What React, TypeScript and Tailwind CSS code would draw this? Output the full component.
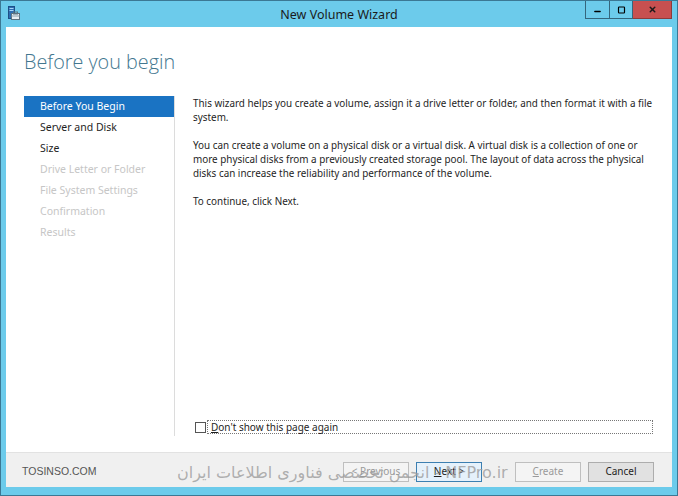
import { Minus, Square, X } from 'lucide-react';

const steps = [
  { label: 'Before You Begin', state: 'active' },
  { label: 'Server and Disk', state: 'enabled' },
  { label: 'Size', state: 'enabled' },
  { label: 'Drive Letter or Folder', state: 'disabled' },
  { label: 'File System Settings', state: 'disabled' },
  { label: 'Confirmation', state: 'disabled' },
  { label: 'Results', state: 'disabled' },
];

const WizardIcon = () => (
  <svg width="12" height="15" viewBox="0 0 12 15">
    <rect x="0.5" y="0.5" width="6" height="12" fill="#2d6fb3" stroke="#1d4f86" />
    <rect x="1.5" y="2" width="4" height="1" fill="#a9d4f5" />
    <rect x="1.5" y="4" width="4" height="1" fill="#a9d4f5" />
    <rect x="3.5" y="7.5" width="8" height="6" fill="#e8eef3" stroke="#5d7280" />
    <rect x="5.5" y="6" width="4" height="2" fill="none" stroke="#5d7280" />
    <rect x="3.5" y="9.5" width="8" height="1" fill="#8aa0ae" />
  </svg>
);

const App = () => {
  return (
    <div className="w-[678px] h-[496px] bg-[#6ccbeb] border border-[#3b7894] flex flex-col relative overflow-hidden">
      {/* title bar */}
      <div className="h-[26px] flex items-start relative shrink-0">
        <div className="pl-[7px] pt-[5px]">
          <WizardIcon />
        </div>
        <div className="absolute left-0 right-0 top-[6px] text-center text-[12.5px] leading-[15px] text-[#1b1b1b] font-['Noto_Sans',sans-serif]">
          New Volume Wizard
        </div>
        <div className="ml-auto flex h-[19px] mr-[5px] -mt-px">
          <div className="w-[25px] h-full border border-[#35667d] bg-[#6ccbeb] flex items-center justify-center">
            <Minus className="w-[9px] h-[9px] text-black mt-[3px]" strokeWidth={4} />
          </div>
          <div className="w-[23px] h-full border border-l-0 border-[#35667d] bg-[#6ccbeb] flex items-center justify-center">
            <Square className="w-[9px] h-[8px] text-black" strokeWidth={3.5} />
          </div>
          <div className="w-[39px] h-full bg-[#c75050] border border-l-0 border-[#8c3b3b] flex items-center justify-center">
            <X className="w-[9px] h-[9px] text-[#1a1a1a]" strokeWidth={4} />
          </div>
        </div>
      </div>

      {/* client area */}
      <div className="mx-[5px] flex flex-col flex-1">
        <div className="bg-white h-[425px] flex flex-col pl-[18px] pr-[18px]">
          <h1 className="mt-[22px] h-[47px] text-[19.8px] leading-[26px] font-light text-[#43778f] font-['Open_Sans',sans-serif]">
            Before you begin
          </h1>
          <div className="flex h-[340px]">
            <ul className="w-[150px] font-['Noto_Sans',sans-serif] text-[10.5px]">
              {steps.map((s) => (
                <li
                  key={s.label}
                  className={
                    s.state === 'active'
                      ? 'h-[21px] leading-[21px] pl-4 bg-[#1a73c3] text-white'
                      : s.state === 'enabled'
                        ? 'h-[21px] leading-[21px] pl-4 text-[#1e1e1e]'
                        : 'h-[21px] leading-[21px] pl-4 text-[#c6c6c6]'
                  }
                >
                  {s.label}
                </li>
              ))}
            </ul>
            <div className="w-px bg-[#dcdcdc]" />
            <div className="flex-1 pl-[18px] pr-px flex flex-col font-['Noto_Sans',sans-serif] text-[9.9px] leading-[14px] text-[#1e1e1e]">
              <p className="whitespace-nowrap">
                This wizard helps you create a volume, assign it a drive letter or folder, and then format it with a file
                <br />
                system.
              </p>
              <p className="mt-[14px] whitespace-nowrap">
                You can create a volume on a physical disk or a virtual disk. A virtual disk is a collection of one or
                <br />
                more physical disks from a previously created storage pool. The layout of data across the physical
                <br />
                disks can increase the reliability and performance of the volume.
              </p>
              <p className="mt-[14px]">To continue, click Next.</p>
              <label className="mt-auto mb-[2px] flex items-center">
                <span className="ml-[2px] w-[11px] h-[11px] border border-[#555] bg-white" />
                <span className="ml-[1px] flex-1 border border-dotted border-[#777] h-[14px] leading-[12px] pl-[3px] text-[10px] text-[#1e1e1e]">
                  <u>D</u>on't show this page again
                </span>
              </label>
            </div>
          </div>
        </div>

        {/* footer */}
        <div className="h-[35px] bg-[#f0f0f0] border-t border-[#e2e2e2] flex items-center pt-[3px] pl-[16px] pr-[18px]">
          <span className="text-[10.5px] text-[#555] font-['Liberation_Sans',sans-serif]">TOSINSO.COM</span>
          <div className="ml-auto flex items-center font-['Noto_Sans',sans-serif] text-[10px]">
            <button className="w-[66px] h-[20px] border border-[#bfbfbf] bg-[#f4f4f4] text-[#9a9a9a]">
              &lt; <u>P</u>revious
            </button>
            <button className="ml-[7px] w-[66px] h-[20px] border border-[#3c7fb1] bg-[#e5f1fb] text-[#1e1e1e]">
              <u>N</u>ext &gt;
            </button>
            <button className="ml-[33px] w-[66px] h-[20px] border border-[#bfbfbf] bg-[#f4f4f4] text-[#9a9a9a]">
              <u>C</u>reate
            </button>
            <button className="ml-[7px] w-[66px] h-[20px] border border-[#adadad] bg-[#e1e1e1] text-[#1e1e1e]">
              Cancel
            </button>
          </div>
        </div>
      </div>

      {/* watermark overlay */}
      <div
        dir="ltr"
        className="absolute left-[176px] top-[461px] text-[16px] leading-[22px] text-[#9c9c9c]/80 font-['DejaVu_Sans',sans-serif] whitespace-nowrap pointer-events-none"
      >
        انجمن تخصصی فناوری اطلاعات ایران - NFPro.ir
      </div>
    </div>
  );
};

export default App;
